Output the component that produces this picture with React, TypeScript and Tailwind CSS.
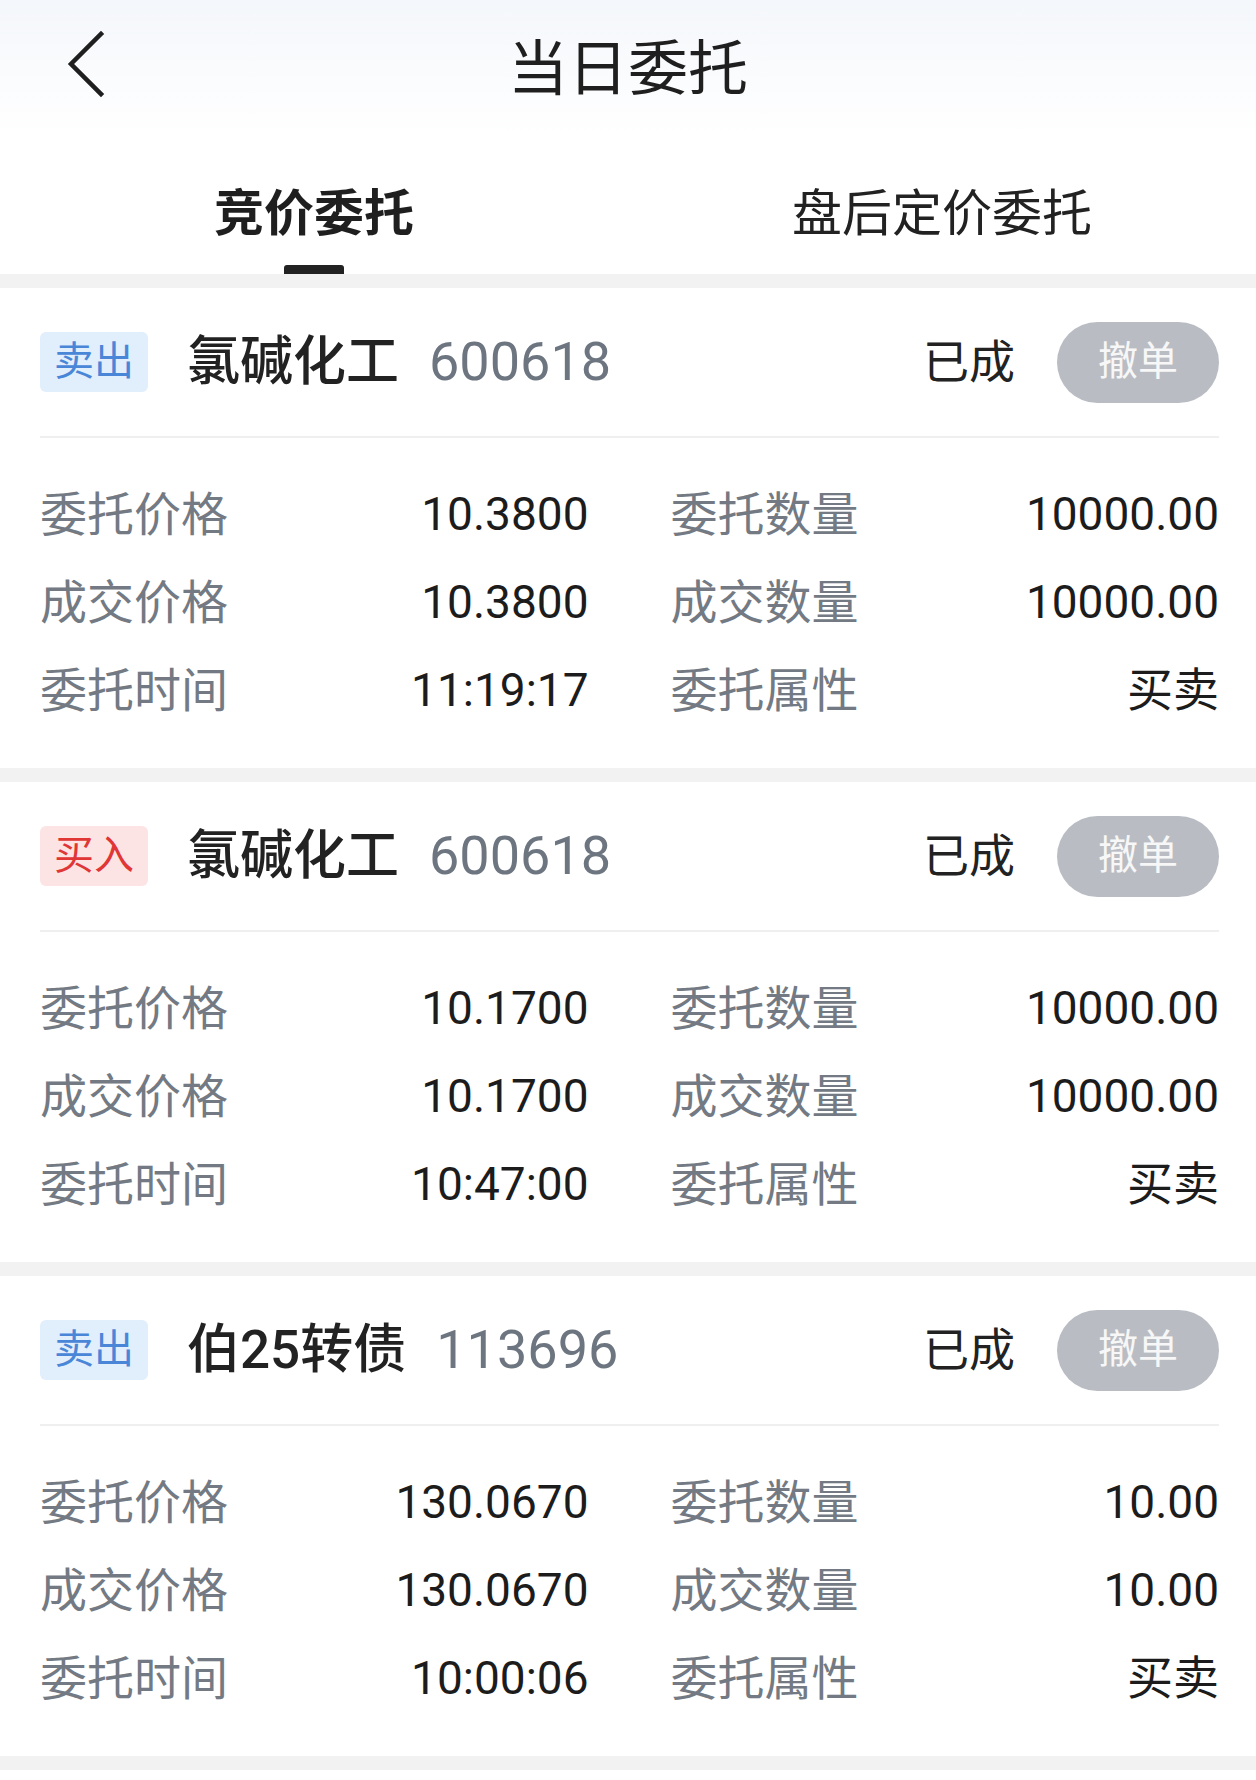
import React from 'react';

type Order = {
  side: 'buy' | 'sell';
  name: string;
  code: string;
  status: string;
  price: string;
  qty: string;
  dealPrice: string;
  dealQty: string;
  time: string;
  attr: string;
};

const ORDERS: Order[] = [
  { side: 'sell', name: '氯碱化工', code: '600618', status: '已成', price: '10.3800', qty: '10000.00', dealPrice: '10.3800', dealQty: '10000.00', time: '11:19:17', attr: '买卖' },
  { side: 'buy', name: '氯碱化工', code: '600618', status: '已成', price: '10.1700', qty: '10000.00', dealPrice: '10.1700', dealQty: '10000.00', time: '10:47:00', attr: '买卖' },
  { side: 'sell', name: '伯25转债', code: '113696', status: '已成', price: '130.0670', qty: '10.00', dealPrice: '130.0670', dealQty: '10.00', time: '10:00:06', attr: '买卖' },
];

const FONT = "font-['Roboto','Noto_Sans_CJK_SC',sans-serif]";

function Cell({ label, value }: { label: string; value: string }) {
  return (
    <div className="flex h-[88px] items-center justify-between">
      <span className="text-[47px] leading-none text-[#737a83]">{label}</span>
      <span className="text-[46px] leading-none text-[#1c1c1c]">{value}</span>
    </div>
  );
}

function OrderCard({ o }: { o: Order }) {
  const sell = o.side === 'sell';
  return (
    <div className="bg-white pl-[40px] pr-[37px]">
      <div className="flex h-[148px] items-center">
        <span className={`flex h-[60px] w-[108px] items-center justify-center rounded-[6px] text-[40px] leading-none ${sell ? 'bg-[#e1eefc] text-[#4a86d8]' : 'bg-[#fde4e4] text-[#e03636]'}`}>
          {sell ? '卖出' : '买入'}
        </span>
        <span className="ml-[39px] text-[53px] font-medium leading-none text-[#222]">{o.name}</span>
        <span className="ml-[30px] text-[54px] leading-none text-[#6d7680]">{o.code}</span>
        <span className="ml-auto text-[46px] leading-none text-[#222]">{o.status}</span>
        <button type="button" className="ml-[42px] flex h-[81px] w-[162px] items-center justify-center rounded-full bg-[#b9bdc3] text-[40px] leading-none text-[#f7f7f7]">撤单</button>
      </div>
      <div className="h-[2px] bg-[#efefef]" />
      <div className="grid grid-cols-2 gap-x-[82px] pb-[34px] pt-[32px]">
        <Cell label="委托价格" value={o.price} />
        <Cell label="委托数量" value={o.qty} />
        <Cell label="成交价格" value={o.dealPrice} />
        <Cell label="成交数量" value={o.dealQty} />
        <Cell label="委托时间" value={o.time} />
        <Cell label="委托属性" value={o.attr} />
      </div>
    </div>
  );
}

export default function App() {
  return (
    <div className={`min-h-[1780px] w-[1256px] bg-white ${FONT}`}>
      <div className="relative flex h-[136px] items-center justify-center bg-gradient-to-b from-[#f4f7fb] to-white pt-[4px]">
        <svg className="absolute left-[66px] top-[30px] h-[70px] w-[42px]" viewBox="0 0 42 70" fill="none" stroke="#1f1f1f" strokeWidth={4.5} strokeLinecap="square">
          <path d="M35 4 L5 34 L35 64" />
        </svg>
        <span className="text-[60px] leading-none text-[#1f1f1f]">当日委托</span>
      </div>
      <div className="grid h-[138px] grid-cols-2">
        <div className="flex flex-col items-center justify-end">
          <span className="text-[50px] font-bold leading-[60px] text-[#1f1f1f]">竞价委托</span>
          <span className="mt-[21px] h-[9px] w-[60px] rounded-t-[3px] bg-[#222]" />
        </div>
        <div className="flex flex-col items-center justify-end">
          <span className="text-[50px] leading-[60px] text-[#222]">盘后定价委托</span>
          <span className="mt-[21px] h-[9px]" />
        </div>
      </div>
      <div className="h-[14px] bg-[#f2f2f2]" />
      {ORDERS.map((o, i) => (
        <div key={i}>
          <OrderCard o={o} />
          <div className="h-[14px] bg-[#f2f2f2]" />
        </div>
      ))}
    </div>
  );
}
